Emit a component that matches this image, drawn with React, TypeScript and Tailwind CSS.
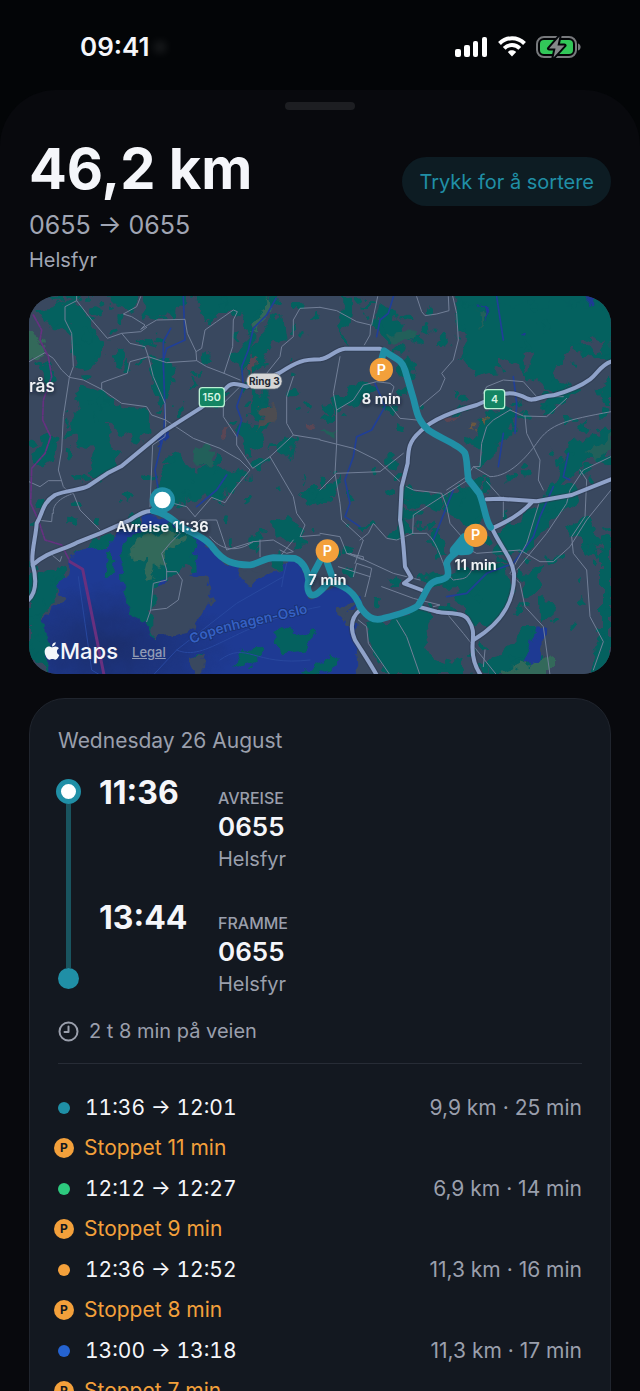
import React from 'react';
import { FaApple } from 'react-icons/fa';

type Trip = { from: string; to: string; distance: string; duration: string; dot: string; stop: string };

const trips: Trip[] = [
  { from: '11:36', to: '12:01', distance: '9,9 km', duration: '25 min', dot: 'bg-[#1f8fa6]', stop: '11 min' },
  { from: '12:12', to: '12:27', distance: '6,9 km', duration: '14 min', dot: 'bg-[#2dc97e]', stop: '9 min' },
  { from: '12:36', to: '12:52', distance: '11,3 km', duration: '16 min', dot: 'bg-[#f3a03b]', stop: '8 min' },
  { from: '13:00', to: '13:18', distance: '11,3 km', duration: '17 min', dot: 'bg-[#2563d0]', stop: '7 min' },
];

const places = [
  { time: '11:36', label: 'AVREISE', name: '0655', area: 'Helsfyr' },
  { time: '13:44', label: 'FRAMME', name: '0655', area: 'Helsfyr' },
];

const parks = [
  'M165 18 L100 55 L60 60 L75 95 L135 110 L160 150 L155 215 L180 235 L215 225 L250 200 L262 160 L235 130 L215 90 L175 40 Z',
  'M265 18 L360 18 L340 60 L300 55 Z M365 90 L440 60 L495 70 L500 18 L380 18 Z',
  'M525 18 L765 18 L745 70 L700 100 L700 190 L665 250 L640 190 L690 130 L650 60 L600 60 L560 85 Z',
  'M735 100 L790 80 L800 150 L750 170 L720 240 L690 260 L700 170 Z',
  'M290 165 L315 180 L300 230 L270 215 Z M390 200 L460 200 L450 290 L430 360 L400 300 Z',
  'M185 285 L240 300 L300 345 L385 360 L392 430 L350 460 L300 430 L270 400 L265 470 L300 480 L280 540 L240 570 L200 540 L225 480 L170 470 L140 430 L175 370 L160 320 Z',
  'M60 240 L100 230 L110 270 L75 300 Z M80 430 L120 440 L110 500 L60 530 L35 500 Z',
  'M460 480 L520 530 L590 520 L640 550 L690 545 L650 600 L560 620 L470 640 L410 600 L430 540 Z',
  'M650 420 L700 390 L750 400 L730 460 L670 500 Z M790 440 L830 440 L815 510 L780 490 Z',
  'M700 310 L750 320 L740 390 L690 370 Z',
  'M960 20 L1000 20 L990 90 L970 150 L965 100 Z M1080 40 L1130 70 L1140 140 L1100 160 L1060 120 Z',
  'M1300 18 L1775 18 L1775 210 L1725 220 L1690 180 L1650 190 L1600 260 L1660 290 L1580 300 L1500 230 L1450 200 L1440 235 L1370 255 L1330 200 L1345 160 L1310 110 Z',
  'M930 330 L1020 275 L1070 300 L1020 340 L950 370 Z M1130 230 L1170 190 L1190 240 L1150 310 Z',
  'M1400 360 L1450 350 L1500 370 L1460 440 L1390 470 L1340 460 Z M1390 450 L1430 440 L1420 510 L1370 530 Z',
  'M1650 470 L1720 430 L1773 420 L1773 530 L1700 510 L1650 560 L1600 590 Z M1600 300 L1680 290 L1640 340 L1570 350 Z',
  'M1730 290 L1773 260 L1773 340 L1740 330 Z M1170 600 L1270 610 L1250 660 L1180 640 Z',
  'M1290 610 L1370 590 L1400 680 L1385 710 L1300 690 L1260 640 Z',
  'M1500 700 L1580 610 L1590 560 L1680 600 L1660 650 L1600 690 L1540 750 L1540 770 L1430 790 L1440 700 Z',
  'M1100 740 L1150 650 L1180 740 Z M1230 740 L1260 730 L1280 790 L1240 800 Z',
  'M1490 850 L1560 840 L1550 910 L1530 930 L1500 890 Z M1570 920 L1605 925 L1600 980 L1560 990 Z',
  'M1190 870 L1400 820 L1460 830 L1470 890 L1450 980 L1400 1020 L1350 1000 L1320 930 L1300 890 L1240 900 Z',
  'M1035 990 L1110 1000 L1190 950 L1250 970 L1210 1020 L1230 1090 L1290 1110 L1330 1100 L1340 1155 L1090 1155 L1050 1060 Z',
  'M1740 750 L1773 740 L1773 1155 L1700 1155 L1740 1040 Z M1640 710 L1700 680 L1740 760 L1700 780 Z',
  'M1500 1020 L1560 1020 L1540 1100 L1470 1155 L1390 1155 L1440 1090 Z M1570 1090 L1590 1155 L1530 1155 Z',
  'M840 600 L900 600 L960 570 L940 620 L870 650 Z M760 700 L800 680 L850 720 L830 760 L760 740 Z',
  'M27 860 L90 840 L130 830 L120 890 L80 960 L85 1155 L27 1100 Z M210 740 L270 730 L260 780 L200 790 Z',
];

const water = [
  'M82 1175 L80 1010 L95 950 L125 930 L118 880 L145 855 L150 805 L250 770 L300 730 L330 700 L380 675 L450 690 L500 735 L560 750 L600 800 L640 830 L655 880 L720 860 L810 810 L845 830 L870 920 L920 900 L960 885 L1020 920 L1010 960 L975 960 L995 1000 L1010 1080 L1020 1175 Z',
  'M1550 1015 L1570 1020 L1565 1110 L1550 1155 L1510 1155 L1530 1090 Z',
  'M375 18 L400 18 Z M410 445 L440 430 L435 455 L415 470 Z M1375 45 L1400 60 L1395 95 Z M1690 18 L1740 18 L1735 40 L1710 40 Z M1500 130 L1515 130 L1512 145 Z',
];

const islands = [
  'M300 770 L340 730 L400 725 L450 700 L500 720 L530 760 L520 830 L480 880 L420 860 L410 960 L400 1045 L385 1010 L335 970 L305 900 Z',
  'M265 780 L275 780 L278 850 L260 860 Z M760 1030 L800 1000 L830 1030 L890 1020 L860 1080 L790 1090 Z',
  'M640 1120 L670 1080 L720 1070 L725 1110 L660 1140 Z M510 1110 L550 1090 L540 1130 Z M850 1150 L940 1090 L960 1110 L900 1155 Z',
];

const builtUp = [
  'M400 900 L490 830 L550 860 L590 920 L540 990 L490 1030 L400 1045 Z',
  'M650 850 L690 830 L760 810 L745 850 L680 890 L655 880 Z M940 960 L980 930 L1000 940 L980 990 Z M510 1100 L555 1095 L545 1155 L525 1140 Z',
  'M1690 155 L1750 130 L1760 190 L1730 200 Z M1505 200 L1540 190 L1530 240 Z',
];

const streams = [
  'M490 20 L495 150 L440 175 L430 210 L435 370 L430 440 L405 540 L415 600 M452 115 L430 155 L430 240',
  'M768 25 L740 75 L700 115 L685 180 L665 230 L670 290 L650 350 L665 390 L650 440',
  'M1120 20 L1105 70 L1080 90 L1070 140 M1430 20 L1450 150 M1480 260 L1490 340 L1485 430 M1065 280 L1095 350 L1055 420 L1010 440 L1000 500 L975 570 L990 640 L975 680 L1020 710',
  'M1300 600 L1260 700 L1240 750 M1600 590 L1560 680 L1540 740 L1480 820 L1400 850 L1340 910 L1280 920 M1645 490 L1630 560 L1650 570 M620 555 L590 600 L530 650 M1450 430 L1435 530',
];

const streets = [
  'M170 32 L135 50 L135 90 L155 130 L160 230 L148 262 L130 380 L125 480 L115 540 L130 590 L150 610',
  'M170 18 L170 32 L215 90 L262 145 L305 130 L330 160 L375 170 L385 200 L400 260 L435 340 L437 400',
  'M362 20 L350 50 L310 72 L335 80 L375 105 L362 118 L410 90 L495 88 L502 130 L528 185 L530 212 L440 218 L385 200 L330 215 L322 250 L245 278 L245 298',
  'M305 130 L362 125 L380 112 M528 185 L545 175 L555 120 L590 95 L640 60 L652 65 L640 90 L638 170 L612 250 L560 230 L530 212',
  'M27 215 L75 188 L100 205 L125 240 L148 262 L190 270 L245 298 L305 340 L380 350 L395 375 L437 390 L520 445 L600 475 L660 510 L690 540 L640 600 L615 638 L575 622 L525 680',
  'M612 250 L660 270 M660 290 L610 340 L610 380 L650 440 L650 465 L698 535 L750 500 L820 435 L900 448',
  'M900 52 L840 55 L820 90 L820 140 L785 170 L780 200 L740 250 M820 260 L800 320 L800 400 L820 435 M750 500 L820 620 L830 670 L855 705 L840 740 L900 735',
  'M437 400 L435 440 L398 465 L392 600 L390 650 M27 575 L60 590 L85 572 L125 572 M100 670 C95 640 130 620 160 610 L180 660 L240 720 M50 690 L95 695 L97 670 M90 790 L120 815 L125 800',
  'M900 52 L950 62 L1010 95 L1052 105 L1050 135 L1033 165 M1073 20 L1055 105 M1190 20 L1205 65 L1215 77 L1250 72 L1287 62 L1285 20 M1298 18 L1310 70 L1315 150 L1300 210 L1265 250 L1275 265 L1260 300 L1200 350',
  'M960 200 L940 310 L950 360 L950 460 L945 550 L960 640 L965 690 L1030 750 L1005 820 M950 360 L1000 330 L1030 285 L1070 275 L1110 280 L1122 290 L1105 340 L1140 385 L1190 390',
  'M900 450 L1000 475 L1070 510 L1140 575 M900 600 L950 550 L1080 545 L1150 490 M1280 600 L1340 560 L1360 530 L1380 530 L1385 460 L1400 410 L1420 390 L1470 360',
  'M1360 530 L1410 560 C1470 560 1520 500 1550 460 C1590 400 1640 390 1773 365 M1390 310 L1400 290 L1450 270 L1510 275 L1550 320 L1630 320 M1640 325 L1580 380 L1510 378 L1470 360 M1515 378 L1520 430 L1560 510 L1555 570 L1570 600 M1560 630 L1520 760 L1470 850 L1500 880 L1515 950 L1570 1010 L1590 1155',
  'M1773 500 L1690 540 L1650 600 L1640 640 L1580 730 L1490 840 M1680 540 L1700 570 L1695 680 L1655 740 L1660 790 L1700 840 L1710 980 L1750 1055 L1720 1140 M1773 600 L1700 690 L1650 770 L1600 815 L1560 815 L1500 780 L1370 790 L1350 780',
  'M1160 590 L1180 600 L1265 610 L1280 650 L1290 700 L1325 740 M1340 572 L1180 675 L1178 730 L1220 730 C1260 760 1270 850 1300 870 C1330 865 1340 870 1355 840 M1178 730 L1130 750 L1100 745 L1060 700 L1045 730 L1020 750 M1450 620 L1450 680 M1400 575 L1440 620',
  'M900 730 L960 740 L980 790 L1030 800 L1030 810 L980 790 M990 790 L1120 850 L1200 870 M955 830 L1050 860 L1035 920 M1050 860 L1055 835 L1010 820 L1000 860 M1085 890 L1180 925 L1260 945 L1240 950 M1015 990 L1040 1010 L1045 1060 L1110 1155 M1130 990 L1160 1040 L1200 1155 M1280 970 L1330 1030 L1430 1155 M1395 1080 L1390 1130',
  'M460 700 L480 730 L450 760 L425 790 L440 840 L440 870 L400 880 L392 960 L380 995 M440 845 L470 845 L487 870 L475 930 L440 955 L395 960 M500 730 L540 690 L590 690 L620 780 L700 755 L760 750 L820 785 L800 790 L780 780 M570 740 C600 780 650 790 700 755 M720 750 L720 800 M820 750 L780 800 M460 640 L500 650 L525 680',
];

const motorways = [
  'M25 930 C52 905 48 860 38 822 C32 790 48 740 50 700 C70 668 65 640 105 615 C140 600 185 600 205 588 L262 550 L305 528 L430 425 L540 355 L615 298 C630 278 645 278 680 290 L780 248 C830 215 850 208 900 208 C930 205 945 178 975 176 L1080 176 L1095 184',
  'M38 825 C80 785 130 780 170 758 L240 730 L330 690 C360 670 380 660 400 664',
  'M1775 214 C1740 225 1735 250 1710 268 C1680 290 1640 305 1600 316 C1560 318 1540 337 1520 325 C1490 310 1470 305 1440 315 L1370 345 C1300 365 1240 385 1200 425 C1165 455 1165 480 1163 520 L1145 590 L1140 690 C1150 740 1152 790 1155 830 L1174 863 L1152 880 L1205 900',
  'M1195 950 L1250 965 C1290 972 1330 965 1345 990 C1362 1015 1360 1030 1358 1060 C1355 1100 1365 1130 1382 1155',
  'M1415 712 C1440 770 1475 800 1482 850 C1485 920 1460 990 1360 1050',
  'M1415 716 C1460 695 1500 675 1535 637 M1400 628 L1440 626 L1550 634 L1655 615 L1773 568',
  'M1020 960 C990 985 990 1015 1005 1050 C1030 1090 1050 1120 1070 1155',
];

const route = [
  'M400 662 C440 668 470 700 490 715 C520 730 560 745 580 775 C610 815 640 825 690 825 C720 820 730 805 760 803 L825 805 C850 815 862 840 866 870 C858 900 868 920 885 914 C905 905 915 885 930 875 C990 890 1010 920 1020 950 C1040 980 1060 995 1090 985 C1130 975 1180 960 1195 945 C1220 910 1220 880 1250 872 C1295 865 1285 850 1280 820 C1285 800 1310 790 1325 772',
  'M915 785 L880 850 L868 880 M915 800 L935 855 M1412 712 C1395 690 1395 650 1378 610 L1345 568 C1340 530 1342 510 1335 490 C1320 465 1260 445 1225 420 C1190 390 1190 360 1180 325 L1155 240 C1145 205 1120 205 1092 182 L1083 215',
];

// Deterministic scatter of small green patches
const patches = (() => {
  let seed = 41;
  const next = () => {
    seed = (seed * 16807) % 2147483647;
    return seed / 2147483647;
  };
  return Array.from({ length: 300 }, () => ({
    x: Math.round(27 + next() * 1746),
    y: Math.round(18 + next() * 1134),
    rx: Math.round(5 + next() * 15),
    ry: Math.round(5 + next() * 12),
  }));
})();

const stops = [
  { x: 1084, y: 239, label: '8 min', ly: 342 },
  { x: 922, y: 783, label: '7 min', ly: 886 },
  { x: 1367, y: 736, label: '11 min', ly: 839 },
];

const RouteMap: React.FC = () => (
  <svg viewBox="27 18 1746 1134" className="block h-auto w-full font-[Inter,sans-serif]" role="img" aria-label="Map">
    <defs>
      <filter id="rough" x="0" y="0" width="1" height="1" colorInterpolationFilters="sRGB">
        <feTurbulence type="fractalNoise" baseFrequency="0.022" numOctaves="3" seed="7" />
        <feDisplacementMap in="SourceGraphic" scale="60" xChannelSelector="R" yChannelSelector="G" />
      </filter>
      <filter id="shade" x="-20%" y="-40%" width="140%" height="200%">
        <feDropShadow dx="0" dy="4" stdDeviation="6" floodColor="#10151f" floodOpacity="0.9" />
      </filter>
      <radialGradient id="deep" cx="0.2" cy="0.8" r="0.4">
        <stop offset="0" stopColor="#1b2e6c" />
        <stop offset="1" stopColor="#1e3a93" />
      </radialGradient>
      <path id="ferry" d="M515 1062 C620 1014 740 1004 890 962" />
    </defs>
    <rect x="27" y="18" width="1746" height="1134" fill="#39485f" />
    <g filter="url(#rough)">
      <rect x="-70" y="-80" width="1950" height="1340" fill="#39485f" />
      <g fill="#04615f">
        {parks.map((d) => <path key={d} d={d} />)}
        {patches.map((p, i) => <ellipse key={i} cx={p.x} cy={p.y} rx={p.rx} ry={p.ry} />)}
        <path d="M1300 -20 H1840 V40 H1300 Z M140 -20 H360 V20 H140 Z M520 -20 H770 V20 H520 Z" />
      </g>
      <path d={water[0]} fill="url(#deep)" />
      <g fill="#1e3a93">{water.slice(1).map((d) => <path key={d} d={d} />)}</g>
      <g fill="#04615f">{islands.map((d) => <path key={d} d={d} />)}</g>
      <g fill="#39485f">{builtUp.map((d) => <path key={d} d={d} />)}</g>
      <g fill="#33695a">
        <path d="M335 770 L390 740 L460 720 L490 750 L430 790 L400 870 L375 860 L390 800 L340 810 Z" />
        <path d="M0 120 L60 140 L75 185 L0 220 Z M760 18 L765 60 L690 130 L740 40 Z M1440 1150 L1500 1130 L1590 1100 L1590 1175 L1440 1175 Z" />
      </g>
      <path d="M520 470 L590 480 L580 520 L530 520 Z M1100 130 L1180 120 L1190 150 L1120 155 Z M900 430 L950 420 L945 450 Z M1370 70 L1390 80 L1380 120 Z M1700 490 L1773 430 L1773 480 L1720 520 Z" fill="#22605a" />
      <g fill="#5a4654">
        <path d="M680 220 L710 210 L705 250 Z M600 410 L620 405 L615 440 L595 440 Z M850 395 L885 400 L880 430 L850 420 Z M1270 385 L1320 375 L1300 400 Z" />
        <path d="M720 350 L770 345 L760 400 L715 410 Z" fill="#4d4c50" />
        <path d="M1345 410 L1365 400 L1360 420 Z M1380 385 L1395 380 L1390 400 Z" fill="#6a5840" />
      </g>
    </g>
    <g fill="none" strokeLinejoin="round" strokeLinecap="round">
      <g stroke="#203f98" strokeWidth="5">{streams.map((d) => <path key={d} d={d} />)}</g>
      <path d="M175 860 L195 1000 L215 1140 L240 1155 M400 1155 L470 1080 L650 940 L790 860 L800 820 M790 860 L785 890 M470 1080 C560 1120 640 1000 900 950 M600 1110 C680 1050 700 1130 870 1110" stroke="#28489f" strokeWidth="3" />
      <g stroke="#727f97" strokeWidth="3">{streets.map((d) => <path key={d} d={d} />)}</g>
      <path d="M40 75 L65 120 L60 150 L85 200 L95 260 L70 330 L68 390 L92 440 L75 490 L35 535 L32 640 L55 690 L75 750 L125 765 L150 815" stroke="#663180" strokeWidth="5" strokeDasharray="18 5" />
      <path d="M150 815 L188 838 L252 1155" stroke="#68307f" strokeWidth="9" />
      <g stroke="#2c3850" strokeWidth="19" strokeOpacity="0.5">{motorways.map((d) => <path key={d} d={d} />)}</g>
      <g stroke="#8fa2c9" strokeWidth="12">{motorways.map((d) => <path key={d} d={d} />)}</g>
      <g stroke="#208fa6" strokeWidth="20">{route.map((d) => <path key={d} d={d} />)}</g>
      <path d="M1305 782 L1335 745 M1325 780 L1345 778" stroke="#208fa6" strokeWidth="32" />
    </g>

    <circle cx="427" cy="630" r="38" fill="#208fa6" />
    <circle cx="427" cy="630" r="25" fill="#fff" />

    <rect x="680" y="250" width="106" height="47" rx="23" fill="#d6d6d6" stroke="#66707d" strokeWidth="2" />
    <text x="733" y="284" textAnchor="middle" fontSize="30" fontWeight="700" fill="#252932">Ring 3</text>
    <g fill="#138563" stroke="#b9f1d4" strokeWidth="4">
      <rect x="538" y="293" width="75" height="57" rx="9" />
      <rect x="1393" y="299" width="61" height="57" rx="9" />
    </g>
    <g fill="#d6f5e5" fontSize="32" fontWeight="600" textAnchor="middle">
      <text x="575" y="334">150</text>
      <text x="1424" y="340">4</text>
    </g>

    <text fontSize="41" fontWeight="600" fill="#3561c4" stroke="#19306f" strokeWidth="5" paintOrder="stroke">
      <textPath href="#ferry">Copenhagen-Oslo</textPath>
    </text>

    <g fontWeight="600" fill="#f1f3f6" filter="url(#shade)">
      <text x="27" y="306" fontSize="52" fontWeight="500">rås</text>
      <g fontSize="44" textAnchor="middle">
        <text x="427" y="725">Avreise 11:36</text>
        {stops.map((s) => <text key={s.label} x={s.x} y={s.ly}>{s.label}</text>)}
      </g>
    </g>
    {stops.map((s) => (
      <g key={s.label}>
        <circle cx={s.x} cy={s.y} r="35" fill="#f3a03b" />
        <text x={s.x} y={s.y + 15} textAnchor="middle" fontSize="43" fontWeight="600" fill="#fff">P</text>
      </g>
    ))}
  </svg>
);

const StatusIcons: React.FC = () => (
  <div className="flex items-center">
    <svg width="33" height="22" viewBox="0 0 33 22" fill="#fff" aria-hidden="true">
      <rect x="0" y="13" width="6" height="8" rx="2" />
      <rect x="9" y="9" width="6" height="12" rx="2" />
      <rect x="18" y="5" width="5" height="16" rx="2" />
      <rect x="27" y="1" width="5" height="20" rx="2" />
    </svg>
    <svg className="ml-2.5" width="28" height="22" viewBox="0 0 28 22" fill="none" stroke="#fff" strokeWidth="4" aria-hidden="true">
      <path d="M1.5 7.5 C8.5 .5 19.500 .5 26.500 7.500" />
      <path d="M6.200 12.300 C10.500 8 17.500 8 21.800 12.300" />
      <path d="M9.800 16 C12 13.800 16 13.800 18.200 16 L14 20.500 Z" fill="#fff" stroke="none" />
    </svg>
    <svg className="ml-2.5" width="46" height="24" viewBox="0 0 46 24" aria-hidden="true">
      <rect x="1" y="2" width="39" height="20" rx="7" fill="none" stroke="#77797c" strokeWidth="2" />
      <rect x="4" y="5" width="33" height="14" rx="4" fill="#32c759" />
      <path d="M42 8.500 C45.500 9.500 45.500 14.500 42 15.500 Z" fill="#77797c" />
      <path d="M23.500 1.500 L13 13.500 H19.500 L17.500 22.500 L28.500 10.500 H21.500 Z" fill="#85878a" stroke="#04060a" strokeWidth="4" paintOrder="stroke" strokeLinejoin="round" />
    </svg>
  </div>
);

const App: React.FC = () => {
  return (
    <div className="flex h-screen flex-col overflow-hidden bg-[#030507] font-[Inter,sans-serif] text-[#f5f6fa]">
      {/* Status bar */}
      <div className="flex h-[90px] shrink-0 items-center justify-between pt-1 pr-[58px] pl-20">
        <div className="flex items-center gap-1">
          <span className="text-[26px] leading-8 font-semibold">09:41</span>
          <span className="h-3 w-3 rounded-full bg-white/10 blur-xs" />
        </div>
        <StatusIcons />
      </div>

      {/* Sheet */}
      <main className="flex-1 rounded-t-[56px] bg-[#08090d] px-[29px] pt-3">
        <div className="mx-auto h-2 w-[70px] rounded-full bg-[#1d1e22]" />

        <header className="mt-[27px] flex items-start justify-between">
          <div>
            <h1 className="text-[56px] leading-16 font-bold">46,2 km</h1>
            <p className="mt-1.5 text-[25px] leading-9 text-[#a0a5b3]">0655 → 0655</p>
            <p className="text-xl leading-[34px] text-[#a0a5b3]">Helsfyr</p>
          </div>
          <button type="button" className="mt-5 h-[49px] rounded-full bg-[#0d1c23] px-[17px] text-xl text-[#208fa6]">
            Trykk for å sortere
          </button>
        </header>

        <section className="relative mt-[19px] overflow-hidden rounded-[28px]">
          <RouteMap />
          <div className="absolute bottom-[7px] left-[15px] flex items-center">
            <FaApple className="h-5 w-4" />
            <span className="text-[22px] leading-8 font-medium">Maps</span>
            <a href="#legal" className="ml-3.5 pt-1 text-[13px] font-medium text-[#929cb5] underline">Legal</a>
          </div>
        </section>

        {/* Day card */}
        <section className="mt-6 h-full rounded-[36px] border border-[#20252e] bg-[#131820] px-7 pt-7">
          <h2 className="text-[21px] leading-7 text-[#9a9fac]">Wednesday 26 August</h2>

          <div className="mt-6 flex">
            <div className="-ml-0.5 flex w-[25px] flex-col items-center pb-2">
              <span className="h-[25px] w-[25px] rounded-full border-[5px] border-[#208fa6] bg-white" />
              <span className="w-[5px] flex-1 bg-[#19545f]" />
              <span className="h-[21px] w-[21px] rounded-full bg-[#208fa6]" />
            </div>
            <div className="ml-[18px] flex flex-1 flex-col gap-8">
              {places.map((place) => (
                <div key={place.label} className="flex">
                  <span className="w-[119px] text-[32px] leading-7 font-bold">{place.time}</span>
                  <div className="pt-[9px]">
                    <p className="text-base leading-5 font-medium text-[#9a9fac]">{place.label}</p>
                    <p className="text-[26px] leading-[38px] font-semibold">{place.name}</p>
                    <p className="text-xl leading-[26px] text-[#9a9fac]">{place.area}</p>
                  </div>
                </div>
              ))}
            </div>
          </div>

          <p className="mt-5 flex items-center gap-2.5 text-xl leading-7 text-[#9a9fac]">
            <svg width="21" height="21" viewBox="0 0 21 21" fill="none" stroke="currentColor" strokeWidth="2" strokeLinecap="round" aria-hidden="true">
              <circle cx="10.5" cy="10.500" r="9" />
              <path d="M10.500 5.500 V11 H6.500" strokeLinejoin="round" />
            </svg>
            2 t 8 min på veien
          </p>

          <hr className="mt-[18px] border-[#272c36]" />

          <ul className="mt-[23px] -ml-1 text-[21px]">
            {trips.map((trip) => (
              <React.Fragment key={trip.from}>
                <li className="flex h-[41px] items-center gap-[11px]">
                  <span className="flex w-5 justify-center">
                    <span className={`h-3 w-3 rounded-full ${trip.dot}`} />
                  </span>
                  <span className="flex-1 tabular-nums">{trip.from} → {trip.to}</span>
                  <span className="text-[#9a9fac]">{trip.distance} · {trip.duration}</span>
                </li>
                <li className="flex h-10 items-center gap-2.5 text-[#f3a03b]">
                  <span className="flex h-5 w-5 items-center justify-center rounded-full bg-[#f3a03b] text-xs font-bold text-[#131820]">P</span>
                  <span>Stoppet {trip.stop}</span>
                </li>
              </React.Fragment>
            ))}
          </ul>
        </section>
      </main>
    </div>
  );
};

export default App;
